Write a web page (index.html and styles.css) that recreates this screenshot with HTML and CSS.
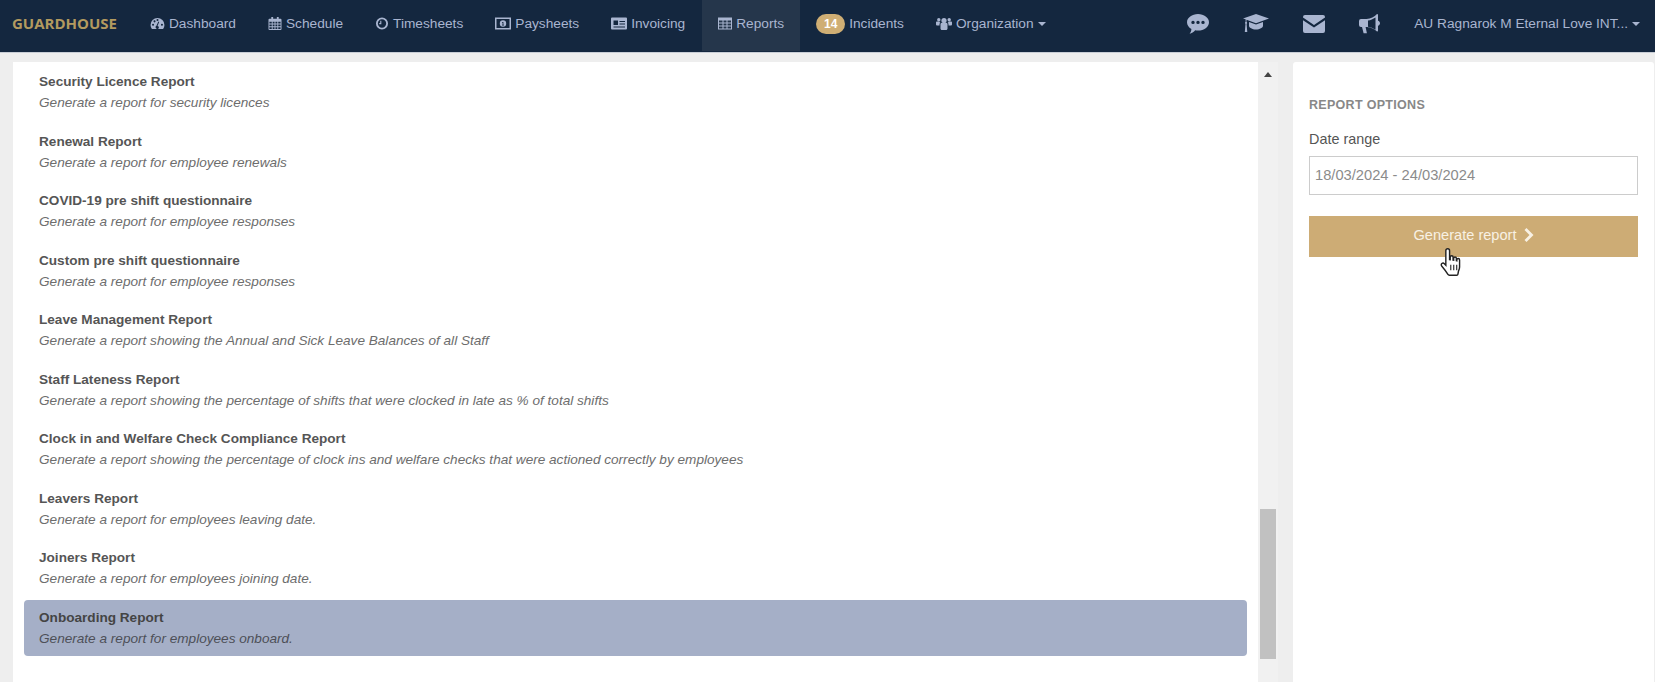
FILE: index.html
```html
<!DOCTYPE html>
<html lang="en">
<head>
  <meta charset="UTF-8" />
  <title>Guardhouse - Reports</title>
  <link rel="stylesheet" href="styles.css">
</head>
<body>

  <!-- TOP NAV -->
  <nav class="topnav">
    <a class="brand" href="#">GUARDHOUSE</a>
    <ul class="nav-links">
      <li><a href="#">
        <svg class="ico" viewBox="0 0 16 14"><path d="M8 1a7.5 7.5 0 0 0-7.5 7.5c0 1.6.5 3 1.3 4.2.2.2.4.3.7.3h11c.3 0 .5-.1.7-.3.8-1.2 1.3-2.6 1.3-4.2A7.5 7.5 0 0 0 8 1zM3.2 9.4a1.1 1.1 0 1 1 0-2.2 1.1 1.1 0 0 1 0 2.2zm1.6-3.6a1.1 1.1 0 1 1 0-2.2 1.1 1.1 0 0 1 0 2.2zM8 4.4a1.1 1.1 0 1 1 0-2.2 1.1 1.1 0 0 1 0 2.2zm1.5 6.6a1.8 1.8 0 1 1-2.6-1.5l2-4.6.9.4-1.8 4.5c.8.1 1.5.7 1.5 1.2zm3.3-1.6a1.1 1.1 0 1 1 0-2.2 1.1 1.1 0 0 1 0 2.2z" fill-rule="evenodd"/></svg>
        <span>Dashboard</span></a></li>
      <li><a href="#">
        <svg class="ico ico-n" viewBox="0 0 14 14"><path d="M3 0h2v2h4V0h2v2h2a1 1 0 0 1 1 1v10a1 1 0 0 1-1 1H1a1 1 0 0 1-1-1V3a1 1 0 0 1 1-1h2zM1 5v2h2.500V5zm3.500 0v2h2V5zm3 0v2h2V5zm3 0v2H13V5zM1 8v2h2.500V8zm3.500 0v2h2V8zm3 0v2h2V8zm3 0v2H13V8zM1 11v2h2.500v-2zm3.500 0v2h2v-2zm3 0v2h2v-2zm3 0v2H13v-2z" fill-rule="evenodd"/></svg>
        <span>Schedule</span></a></li>
      <li><a href="#">
        <svg class="ico ico-n" viewBox="0 0 14 14"><path d="M7 .5a6.500 6.500 0 1 0 0 13 6.500 6.500 0 0 0 0-13zm0 2a4.500 4.500 0 1 1 0 9 4.500 4.500 0 0 1 0-9zM6.300 4v3.700H4v-1.200h1.100V4z" fill-rule="evenodd"/></svg>
        <span>Timesheets</span></a></li>
      <li><a href="#">
        <svg class="ico ico-w" viewBox="0 0 16 12"><path d="M0 0h16v12H0zm1.500 1.500v9h13v-9zM8 2.800a3.200 3.200 0 1 1 0 6.400 3.200 3.200 0 0 1 0-6.400zM7 4.500v.7h.6v2H7v.7h2v-.7h-.6V4.500z" fill-rule="evenodd"/></svg>
        <span>Paysheets</span></a></li>
      <li class="invoicing"><a href="#">
        <svg class="ico ico-w" viewBox="0 0 16 12"><path d="M1 0h14a1 1 0 0 1 1 1v10a1 1 0 0 1-1 1H1a1 1 0 0 1-1-1V1a1 1 0 0 1 1-1zm1.500 3v4.500H7V3zm6 .5v1H14v-1zm0 2.500v1H14V6zm-6 3v1H14V9z" fill-rule="evenodd"/></svg>
        <span>Invoicing</span></a></li>
      <li class="active"><a href="#">
        <svg class="ico ico-n" viewBox="0 0 14 12"><path d="M0 0h14v12H0zm1 3v2h3.500V3zm4.500 0v2h3V3zm4 0v2H13V3zM1 6v2h3.500V6zm4.500 0v2h3V6zm4 0v2H13V6zM1 9v2h3.500V9zm4.500 0v2h3V9zm4 0v2H13V9z" fill-rule="evenodd"/></svg>
        <span>Reports</span></a></li>
      <li><a href="#"><span class="badge">14</span> <span>Incidents</span></a></li>
      <li><a href="#">
        <svg class="ico ico-w" viewBox="0 0 16 13"><circle cx="8" cy="3.500" r="2.600"/><circle cx="2.800" cy="2.700" r="1.700"/><circle cx="13.200" cy="2.700" r="1.700"/><path d="M4.500 7a1.500 1.500 0 0 1 1.500-1.200h4A1.500 1.500 0 0 1 11.500 7v4.500c0 .8-.6 1.500-1.500 1.500H6c-.9 0-1.500-.7-1.500-1.500zM0 5.500c0-.6.5-1 1-1h2.300c.3.700.6 1 1 1.300C3.500 6.200 3.500 7 3.500 8.500H1a1 1 0 0 1-1-1zM16 5.500c0-.6-.5-1-1-1h-2.300c-.3.700-.6 1-1 1.300.8.400.8 1.200.8 2.700H15a1 1 0 0 0 1-1z"/></svg>
        <span>Organization</span> <span class="caret"></span></a></li>
    </ul>
    <ul class="nav-right">
      <li><a href="#"><svg class="ico-lg" viewBox="0 0 22 20"><path d="M11 0c6 0 11 3.700 11 8.300s-5 8.300-11 8.300c-1 0-1.900-.1-2.800-.3C6.800 18 4.600 19.500 2.600 19.800c1-1.200 1.700-2.800 1.800-4.800C1.700 13.500 0 11 0 8.300 0 3.700 5 0 11 0zM6 6.700a1.700 1.700 0 1 0 0 3.400 1.700 1.700 0 0 0 0-3.400zm5 0a1.700 1.700 0 1 0 0 3.400 1.700 1.700 0 0 0 0-3.400zm5 0a1.700 1.700 0 1 0 0 3.400 1.700 1.700 0 0 0 0-3.400z" fill-rule="evenodd"/></svg></a></li>
      <li><a href="#"><svg class="ico-lg ico-cap" viewBox="0 0 26 20"><path d="M13 0l13 4.500-13 4.800L3.500 5.800V8c.4.200.6.500.6.900 0 .4-.2.700-.5.900l.7 8.200H1.800l.7-8.200c-.3-.2-.5-.5-.5-.9 0-.4.200-.7.600-.9V5.300L0 4.500zM6 8l7 2.600L20 8v3.800c0 2-3.200 3.700-7 3.700s-7-1.700-7-3.700z"/></svg></a></li>
      <li><a href="#"><svg class="ico-lg" viewBox="0 0 22 18"><path d="M0 2a2 2 0 0 1 2-2h18a2 2 0 0 1 2 2v.6L11 10 0 2.600zM0 5.200l11 7.300 11-7.300V16a2 2 0 0 1-2 2H2a2 2 0 0 1-2-2z"/></svg></a></li>
      <li><a href="#"><svg class="ico-lg ico-horn" viewBox="0 0 21 20"><path d="M18 0c.6 0 1 .5 1 1v5.800c1.200.3 2 1.300 2 2.500s-.8 2.200-2 2.500v4.700c0 .6-.4 1-1 1-2.700-2.500-6-4-10-4.500H2a2 2 0 0 1-2-2V7a2 2 0 0 1 2-2h5.500C11.800 4.700 15.300 2.800 18 0zm-1.500 3.400C14 5 11.500 6 9 6.500v6.300c2.500.4 5 1.400 7.500 3zM3 13h3.600l1.300 6.200H4.600z" fill-rule="evenodd"/></svg></a></li>
      <li class="user"><a href="#"><span>AU Ragnarok M Eternal Love INT...</span> <span class="caret"></span></a></li>
    </ul>
  </nav>

  <div class="page">
    <!-- REPORT LIST -->
    <section class="list-panel">
      <div class="report-list">
        <a class="report" href="#"><b>Security Licence Report</b><i>Generate a report for security licences</i></a>
        <a class="report" href="#"><b>Renewal Report</b><i>Generate a report for employee renewals</i></a>
        <a class="report" href="#"><b>COVID-19 pre shift questionnaire</b><i>Generate a report for employee responses</i></a>
        <a class="report" href="#"><b>Custom pre shift questionnaire</b><i>Generate a report for employee responses</i></a>
        <a class="report" href="#"><b>Leave Management Report</b><i>Generate a report showing the Annual and Sick Leave Balances of all Staff</i></a>
        <a class="report" href="#"><b>Staff Lateness Report</b><i>Generate a report showing the percentage of shifts that were clocked in late as % of total shifts</i></a>
        <a class="report" href="#"><b>Clock in and Welfare Check Compliance Report</b><i>Generate a report showing the percentage of clock ins and welfare checks that were actioned correctly by employees</i></a>
        <a class="report" href="#"><b>Leavers Report</b><i>Generate a report for employees leaving date.</i></a>
        <a class="report" href="#"><b>Joiners Report</b><i>Generate a report for employees joining date.</i></a>
        <a class="report selected" href="#"><b>Onboarding Report</b><i>Generate a report for employees onboard.</i></a>
      </div>
      <div class="scrollbar">
        <span class="scroll-up"></span>
        <span class="scroll-thumb"></span>
      </div>
    </section>

    <!-- OPTIONS -->
    <aside class="options-panel">
      <h5>REPORT OPTIONS</h5>
      <label for="range">Date range</label>
      <input id="range" type="text" value="18/03/2024 - 24/03/2024" />
      <button type="button">Generate report
        <svg class="chev" viewBox="0 0 10 14"><path d="M2.500 0L9.500 7l-7 7L.5 12l5-5-5-5z"/></svg>
      </button>
      <svg class="hand" viewBox="0 0 20 28"><path d="M7 1.500c1 0 1.700.8 1.700 1.800v8l.6.100V9.200c0-1.800 2.600-1.800 2.600 0v2.600l.5.100v-1.700c0-1.700 2.500-1.700 2.500 0v2.200l.4.100v-.9c0-1.600 2.500-1.600 2.500.1v6.300c0 1.500-.5 2.700-1 3.800l-.5 2.800c-.1.600-.5 1-1.100 1H8.500c-.6 0-1-.2-1.300-.7-1.500-2.500-3.700-5.400-5.500-7.500-1.500-2 .8-3.800 2.300-2.300l1.300 1.400V3.300c0-1 .7-1.800 1.700-1.800z" fill="#fff" stroke="#222" stroke-width="1.300"/><path d="M9.800 16v5M12.500 16v5M15.200 16v5" stroke="#222" stroke-width="1"/></svg>
    </aside>
  </div>

</body>
</html>
```

FILE: styles.css
```css
html, body {
  margin: 0;
  padding: 0;
  height: 100%;
  overflow: hidden;
}

body {
  background: #eeeeee;
  font-family: "Liberation Sans", Arial, sans-serif;
  font-size: 14px;
  color: #555;
  display: flex;
  flex-direction: column;
}

a { text-decoration: none; color: inherit; }
ul { list-style: none; margin: 0; padding: 0; display: flex; height: 100%; }

/* TOP NAV */
.topnav {
  flex: none;
  height: 52px;
  background: #14273f;
  border-bottom: 1px solid #c9ced6;
  display: flex;
  align-items: stretch;
  color: #a9b5d0;
  font-size: 13.700px;
}

.brand {
  font-family: "Open Sans", sans-serif;
  font-weight: 700;
  font-size: 15px;
  color: #b39a5f;
  line-height: 47px;
  padding: 0 17px 0 12px;
}

.nav-links li a, .nav-right li a {
  display: flex;
  align-items: center;
  box-sizing: border-box;
  height: 51px;
  padding: 0 16px 4px;
  white-space: nowrap;
}

.nav-links li.invoicing a { padding-right: 17px; }
.nav-links li.active a { background: #25364b; }

.ico { width: 15px; height: 13px; fill: currentColor; margin-right: 4px; flex: none; }
.ico-n { width: 14px; }
.ico-w { width: 16px; }

.badge {
  background: #cfae74;
  color: #fff;
  font-weight: 700;
  font-size: 12px;
  border-radius: 10px;
  width: 29px;
  height: 20px;
  line-height: 20px;
  text-align: center;
  margin-right: 4px;
}

.caret {
  display: inline-block;
  margin-left: 4px;
  border-top: 4px solid currentColor;
  border-left: 4px solid transparent;
  border-right: 4px solid transparent;
}

.nav-right { margin-left: auto; }
.nav-right li a { padding: 0 16px 4px 18px; }
.nav-right li.user a { padding: 0 15px 4px 18px; }
.ico-lg { width: 22px; height: 20px; fill: currentColor; }
.ico-cap { width: 26px; }
.ico-horn { width: 21px; }

/* LAYOUT */
.page {
  flex: 1;
  min-height: 0;
  display: flex;
  padding: 9px 0 0 13px;
}

/* REPORT LIST */
.list-panel {
  width: 1265px;
  display: flex;
  background: #fff;
}

.report-list {
  flex: 1;
  padding: 0 11px;
}

.report {
  display: flex;
  flex-direction: column;
  box-sizing: border-box;
  height: 59.500px;
  padding: 10px 15px 0;
  border-radius: 4px;
}

.report b { font-size: 13.600px; line-height: 20px; color: #555; }
.report i { font-size: 13.600px; line-height: 20px; margin-top: 1px; color: #6d6d6d; }

.report.selected {
  background: #a5afc7;
  height: 56px;
  margin-top: 2px;
  padding-top: 8px;
}
.report.selected b { color: #444; }
.report.selected i { color: #4d4f58; }

.scrollbar {
  flex: none;
  width: 20px;
  background: #f1f1f1;
  display: flex;
  flex-direction: column;
  align-items: center;
}

.scroll-up {
  margin-top: 10px;
  border-bottom: 5px solid #444;
  border-left: 4px solid transparent;
  border-right: 4px solid transparent;
}

.scroll-thumb {
  width: 16px;
  height: 150px;
  margin-top: 432px;
  background: #c1c1c1;
}

/* OPTIONS */
.options-panel {
  position: relative;
  margin-left: 15px;
  flex: 1;
  margin-right: 1px;
  background: #fff;
  padding: 35px 16px 0;
  display: flex;
  flex-direction: column;
  align-items: stretch;
  border-radius: 3px 3px 0 0;
}

.options-panel h5 {
  margin: 0;
  font-size: 12.500px;
  letter-spacing: .3px;
  line-height: 16px;
  font-weight: 700;
  color: #888;
}

.options-panel label { margin-top: 16px; line-height: 20px; font-size: 14.400px; color: #555; }

.options-panel input {
  margin-top: 7px;
  height: 39px;
  box-sizing: border-box;
  border: 1px solid #ccc;
  padding: 0 5px 2px;
  font: 14.700px "Liberation Sans", Arial, sans-serif;
  color: #8b8b8b;
}

.options-panel button {
  margin-top: 21px;
  height: 41px;
  border: 0;
  padding: 0 0 4px;
  background: #cdac75;
  color: #f8f1e4;
  font: 14.600px "Liberation Sans", Arial, sans-serif;
  display: flex;
  align-items: center;
  justify-content: center;
  gap: 7px;
}

.chev { width: 10px; height: 14px; fill: #f8f1e4; }

/* cursor in the screenshot */
.hand {
  position: absolute;
  left: 147px;
  top: 185px;
  width: 22px;
  height: 31px;
}
```
